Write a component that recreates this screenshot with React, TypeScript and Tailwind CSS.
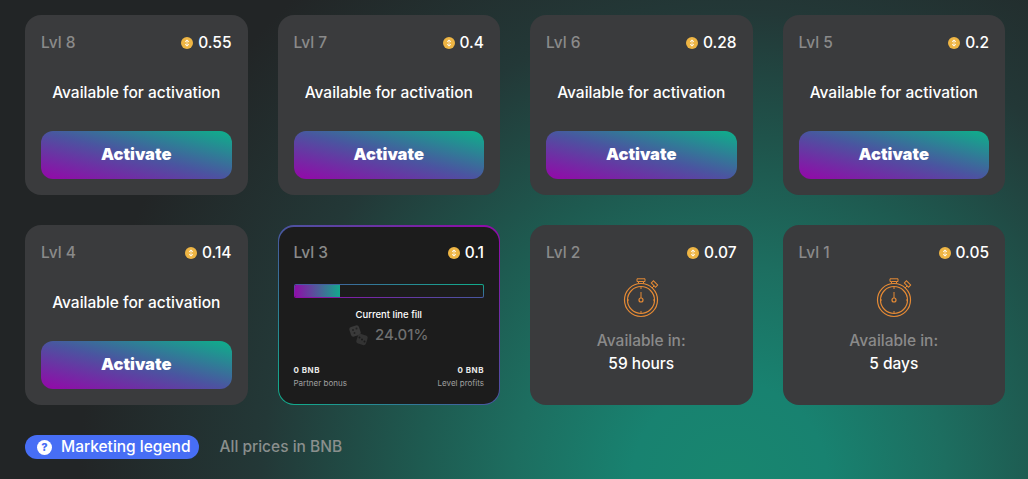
import React from 'react';

const activateLevels = [
  { lvl: 8, price: '0.55' },
  { lvl: 7, price: '0.4' },
  { lvl: 6, price: '0.28' },
  { lvl: 5, price: '0.2' },
];

const Coin = () => (
  <svg width="12" height="12" viewBox="0 0 12 12" className="shrink-0">
    <circle cx="6" cy="6" r="6" fill="#eeb544" />
    <path d="M6 2.6 8 4.6 7.3 5.3 6 4 4.7 5.3 4 4.6ZM6 9.4 4 7.4 4.7 6.7 6 8 7.3 6.7 8 7.4Z" fill="#fff" />
    <path d="M6 5.2 6.8 6 6 6.8 5.2 6Z" fill="#fff" />
  </svg>
);

const Dice = () => (
  <svg width="20" height="21" viewBox="0 0 20 21" className="shrink-0">
    <rect x="1" y="1" width="10" height="10" rx="2.5" fill="#3a3a3a" transform="rotate(-18 6 6)" />
    <rect x="8" y="9.5" width="10" height="10" rx="2.5" fill="#333" transform="rotate(18 13 14.5)" />
    <circle cx="4" cy="5" r="1" fill="#232323" />
    <circle cx="7.5" cy="3.5" r="1" fill="#232323" />
    <circle cx="5.5" cy="8" r="1" fill="#232323" />
    <circle cx="13" cy="14.5" r="1" fill="#1c1c1c" />
    <circle cx="10.5" cy="12.5" r="1" fill="#1c1c1c" />
    <circle cx="15.5" cy="16.5" r="1" fill="#1c1c1c" />
  </svg>
);

const Stopwatch = () => (
  <svg width="36" height="40" viewBox="0 0 36 40" fill="none" stroke="#e58a35" strokeWidth="1">
    <circle cx="18" cy="22" r="16.5" strokeWidth="1.2" />
    <circle cx="18" cy="22" r="13.5" strokeWidth="1.2" />
    <circle cx="18" cy="22" r="2" strokeWidth="1.2" />
    <path d="M18 20v-6M18 8.5v2.5M18 33v2.5M4.5 22h1.5M30 22h1.5" />
    <path d="M15.5 5.5V3.5H14V.8h8v2.7h-1.5v2M15.5 3.5h5" />
    <path d="m29 10 2-2" />
    <rect x="28.5" y="4.5" width="6" height="3" transform="rotate(45 31.5 6)" />
  </svg>
);

const Header = ({ lvl, price }: { lvl: number; price: string }) => (
  <div className="flex items-center justify-between h-[24px]">
    <span className="text-[15.5px] font-medium text-[#8a8a8a]">Lvl {lvl}</span>
    <span className="flex items-center gap-[5px] text-[15.5px] font-medium text-white">
      <Coin />
      {price}
    </span>
  </div>
);

const ActivateCard = ({ lvl, price }: { lvl: number; price: string }) => (
  <div className="h-[180px] rounded-2xl bg-[#3a3b3d] px-4 pt-[16px] pb-4 flex flex-col">
    <Header lvl={lvl} price={price} />
    <p className="mt-[27px] text-center text-[15.5px] font-medium leading-[22px] text-white">Available for activation</p>
    <button className="mt-auto h-[48px] rounded-xl bg-[linear-gradient(to_top_right,#8e0ea8_5%,#4a55a0_50%,#13a88c_95%)] pb-[2px] text-[16.5px] font-black text-white">
      Activate
    </button>
  </div>
);

const WaitCard = ({ lvl, price, wait }: { lvl: number; price: string; wait: string }) => (
  <div className="h-[180px] rounded-2xl bg-[#3a3b3d] px-4 pt-[16px] flex flex-col">
    <Header lvl={lvl} price={price} />
    <div className="mt-[13px] flex justify-center">
      <Stopwatch />
    </div>
    <p className="mt-[12px] text-center text-[15.5px] font-medium leading-[22px] text-[#8a8a8a]">Available in:</p>
    <p className="mt-[1px] text-center text-[15.5px] font-medium leading-[22px] text-white">{wait}</p>
  </div>
);

const ProgressCard = () => (
  <div className="h-[180px] rounded-2xl p-[1.5px] bg-[linear-gradient(to_top_right,#13a88c_5%,#4a55a0_50%,#8e0ea8_95%)]">
    <div className="h-full rounded-[15px] bg-[#1c1c1c] px-[14.5px] pt-[14.5px] flex flex-col">
      <Header lvl={3} price="0.1" />
      <div className="mt-[19px] h-[14px] rounded-[2px] p-px bg-[linear-gradient(to_top_right,#8e0ea8_5%,#4a55a0_50%,#13a88c_95%)]">
        <div className="h-full rounded-[1px] bg-[#1c1c1c]">
          <div className="h-full w-[24%] rounded-l-[1px] bg-[linear-gradient(90deg,#8e0ea8,#13a88c)]" />
        </div>
      </div>
      <p className="mt-[10px] text-center text-[9.5px] font-medium leading-[14px] text-white">Current line fill</p>
      <div className="mt-[2px] flex items-center justify-center gap-[6px] text-[15px] font-medium text-[#6f6f6f]">
        <Dice />
        24.01%
      </div>
      <div className="mt-[17px] flex justify-between text-[8px] leading-[12px]">
        <div>
          <p className="font-bold tracking-[0.5px] text-[#e8e8e8]">0 BNB</p>
          <p className="mt-[1px] text-[#a0a0a0]">Partner bonus</p>
        </div>
        <div className="text-right">
          <p className="font-bold tracking-[0.5px] text-[#e8e8e8]">0 BNB</p>
          <p className="mt-[1px] text-[#a0a0a0]">Level profits</p>
        </div>
      </div>
    </div>
  </div>
);

export default function App() {
  return (
    <div className="h-[479px] w-[1028px] overflow-hidden bg-[radial-gradient(circle_650px_at_730px_480px,#18866f_0%,#188270_15%,#1d6e60_33%,#1e5a50_48%,#233837_72%,#222526_100%)] pl-[25px] pr-[23px] pt-[15px] font-['Inter',sans-serif]">
      <div className="grid grid-cols-4 gap-[30px]">
        {activateLevels.map((item) => (
          <ActivateCard key={item.lvl} lvl={item.lvl} price={item.price} />
        ))}
        <ActivateCard lvl={4} price="0.14" />
        <ProgressCard />
        <WaitCard lvl={2} price="0.07" wait="59 hours" />
        <WaitCard lvl={1} price="0.05" wait="5 days" />
      </div>
      <div className="mt-[30px] flex items-center gap-5">
        <button className="flex h-[24px] items-center gap-[9px] rounded-full bg-[#476ef5] pl-3 pr-[9px] text-[15.5px] font-medium text-white">
          <span className="flex h-[15px] w-[15px] items-center justify-center rounded-full bg-white text-[11px] font-extrabold text-[#476ef5]">?</span>
          Marketing legend
        </button>
        <span className="text-[15.5px] font-medium text-[#8a8f8d]">All prices in BNB</span>
      </div>
    </div>
  );
}
